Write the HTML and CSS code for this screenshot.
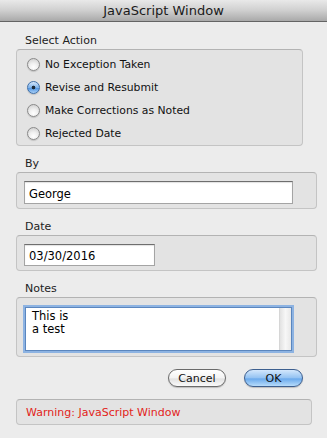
FILE: index.html
```html
<!DOCTYPE html>
<html lang="en">
<head>
    <meta charset="UTF-8">
    <meta name="viewport" content="width=device-width, initial-scale=1.0">
    <title>JavaScript Window</title>
    <link rel="stylesheet" href="styles.css">
</head>
<body>

    <div class="window">
        <div class="titlebar">JavaScript Window</div>

        <div class="content">
            <div class="section first">
                <div class="label">Select Action</div>
                <div class="group radios">
                    <label class="radio-row"><input type="radio" name="action"> No Exception Taken</label>
                    <label class="radio-row"><input type="radio" name="action" checked> Revise and Resubmit</label>
                    <label class="radio-row"><input type="radio" name="action"> Make Corrections as Noted</label>
                    <label class="radio-row"><input type="radio" name="action"> Rejected Date</label>
                </div>
            </div>

            <div class="section">
                <div class="label">By</div>
                <div class="group field">
                    <input type="text" class="text-input wide" value="George">
                </div>
            </div>

            <div class="section">
                <div class="label">Date</div>
                <div class="group field">
                    <input type="text" class="text-input short" value="03/30/2016">
                </div>
            </div>

            <div class="section">
                <div class="label">Notes</div>
                <div class="group field notes">
                    <div class="textarea-wrap">
                        <textarea class="notes-text">This is
a test</textarea>
                        <div class="scroll-track"></div>
                    </div>
                </div>
            </div>

            <div class="buttons">
                <button class="btn">Cancel</button>
                <button class="btn default">OK</button>
            </div>

            <div class="warning">Warning: JavaScript Window</div>
        </div>
    </div>

</body>
</html>
```

FILE: styles.css
```css
body {
    margin: 0;
    padding: 0;
    font-family: "DejaVu Sans", "Noto Sans", sans-serif;
    font-size: 11px;
    color: #111;
    background-color: #ececec;
}
.window {
    width: 327px;
    height: 438px;
    background-color: #ececec;
    overflow: hidden;
}
.titlebar {
    height: 21px;
    line-height: 22px;
    text-align: center;
    font-size: 13px;
    color: #1a1a1a;
    background: linear-gradient(#e9e9e9, #cfcfcf 50%, #a9a9a9);
    border-bottom: 1px solid #646464;
}
.content {
    padding: 0 24px 0 16px;
}
.section {
    margin-top: 11px;
}
.section.first {
    margin-top: 12px;
}
.label {
    height: 15px;
    line-height: 14px;
    padding-left: 9px;
    font-size: 11px;
    color: #222;
}
.group {
    width: 285px;
    background-color: #e3e3e3;
    border: 1px solid #c4c4c4;
    border-top-color: #b3b3b3;
    border-radius: 4px;
}
.radios {
    padding-top: 3px;
}
.radio-row {
    display: flex;
    align-items: center;
    height: 23px;
    padding-left: 10px;
    gap: 5px;
    font-size: 10.8px;
}
.radio-row input {
    appearance: none;
    -webkit-appearance: none;
    width: 13px;
    height: 13px;
    margin: 0;
    border-radius: 50%;
    border: 1px solid #8a8a8a;
    background: radial-gradient(circle at 50% 75%, #ffffff, #f0f0f0 40%, #c9c9c9);
    box-shadow: 0 1px 1px rgba(0, 0, 0, 0.15);
}
.radio-row input:checked {
    border-color: #3f6fa8;
    background: radial-gradient(circle, #1c2a3a 0, #1c2a3a 1.5px, transparent 2.2px),
        linear-gradient(#d4e6fb, #7fb3ea 50%, #4f93e0 55%, #a9d0f7);
}
.field {
    padding: 8px 7px 4px;
}
.text-input {
    display: block;
    box-sizing: border-box;
    height: 23px;
    margin: 0;
    padding: 2px 4px 0;
    font-family: "DejaVu Sans", sans-serif;
    font-size: 11.5px;
    color: #000;
    background-color: #fff;
    border: 1px solid #a4a4a4;
    border-top-color: #6e6e6e;
    box-shadow: inset 0 1px 1px rgba(0, 0, 0, 0.12);
}
.wide {
    width: 269px;
}
.short {
    width: 131px;
    height: 22px;
}
.notes {
    padding: 7px 7px 3px;
}
.textarea-wrap {
    display: flex;
    width: 265px;
    height: 42px;
    border: 1px solid #5b86be;
    box-shadow: 0 0 0 2px #8db3e2;
    margin-left: 1px;
    margin-top: 2px;
    margin-bottom: 2px;
    background-color: #fff;
}
.notes-text {
    flex: 1;
    margin: 0;
    padding: 2px 6px;
    border: none;
    outline: none;
    resize: none;
    font-family: "DejaVu Sans", sans-serif;
    font-size: 11.5px;
    line-height: 13px;
    color: #000;
    overflow: hidden;
}
.scroll-track {
    width: 11px;
    background: linear-gradient(to right, #e2e2e2, #f7f7f7 50%, #e8e8e8);
    border-left: 1px solid #d6d6d6;
}
.buttons {
    display: flex;
    justify-content: flex-end;
    gap: 18px;
    width: 287px;
    margin-top: 12px;
}
.btn {
    width: 58px;
    height: 18px;
    padding: 0;
    font-family: "DejaVu Sans", sans-serif;
    font-size: 11px;
    color: #111;
    border: 1px solid #6a6a6a;
    border-radius: 9px;
    background: linear-gradient(#ffffff, #f3f3f3 50%, #e2e2e2 55%, #fafafa);
    box-shadow: 0 1px 1px rgba(0, 0, 0, 0.2);
}
.btn.default {
    width: 59px;
    border-color: #3d5f8f;
    background: linear-gradient(#d3e7fc, #93c2f2 50%, #6aa9ec 55%, #b7dcfb);
}
.warning {
    box-sizing: border-box;
    width: 296px;
    height: 26px;
    margin-top: 12px;
    padding-left: 9px;
    line-height: 26px;
    color: #e2231a;
    background-color: #e3e3e3;
    border: 1px solid #c4c4c4;
    border-top-color: #b3b3b3;
    border-radius: 4px;
}
```
